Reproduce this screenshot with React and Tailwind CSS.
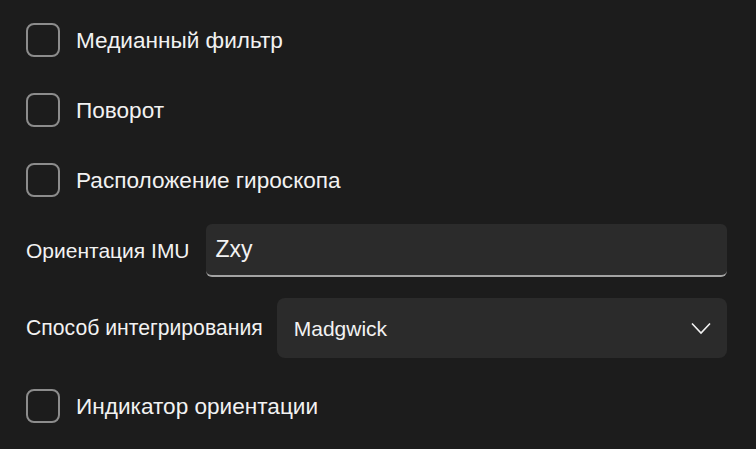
import React from 'react';

const font = { fontFamily: '"Liberation Sans", Arial, sans-serif' };

const Check = ({ label, className = '' }) => (
  <label className={`flex items-center h-[34px] ${className}`}>
    <span className="w-[34px] h-[34px] rounded-[8px] border-2 border-[#8c8c8c] shrink-0" />
    <span className="ml-[16px] mt-[2px] text-[22.6px] leading-none text-[#f2f2f2]">{label}</span>
  </label>
);

export default function App() {
  return (
    <div className="w-[756px] h-[449px] bg-[#1c1c1c] pl-[26px] pr-[29px] pt-[23px] flex flex-col overflow-hidden" style={font}>
      <Check label="Медианный фильтр" />
      <Check label="Поворот" className="mt-[36px]" />
      <Check label="Расположение гироскопа" className="mt-[36px]" />

      <div className="flex items-center mt-[27px]">
        <span className="text-[21px] leading-none text-[#f2f2f2] whitespace-nowrap">Ориентация IMU</span>
        <div className="ml-[16px] flex-1 h-[53px] bg-[#2b2b2b] rounded-[6px] border-b-2 border-[#a3a3a3] flex items-center px-[10px]">
          <span className="text-[23px] leading-none text-[#f2f2f2]">Zxy</span>
        </div>
      </div>

      <div className="flex items-center mt-[21px]">
        <span className="text-[21.2px] leading-none text-[#f2f2f2] whitespace-nowrap">Способ интегрирования</span>
        <div className="ml-[14px] flex-1 h-[60px] bg-[#2b2b2b] rounded-[8px] flex items-center justify-between pl-[17px] pr-[16px]">
          <span className="text-[21px] leading-none text-[#f2f2f2]">Madgwick</span>
          <svg width="20" height="13" viewBox="0 0 20 13" fill="none">
            <polyline points="1,1.5 10,11 19,1.5" stroke="#f2f2f2" strokeWidth="1.6" />
          </svg>
        </div>
      </div>

      <Check label="Индикатор ориентации" className="mt-[31px]" />
    </div>
  );
}
